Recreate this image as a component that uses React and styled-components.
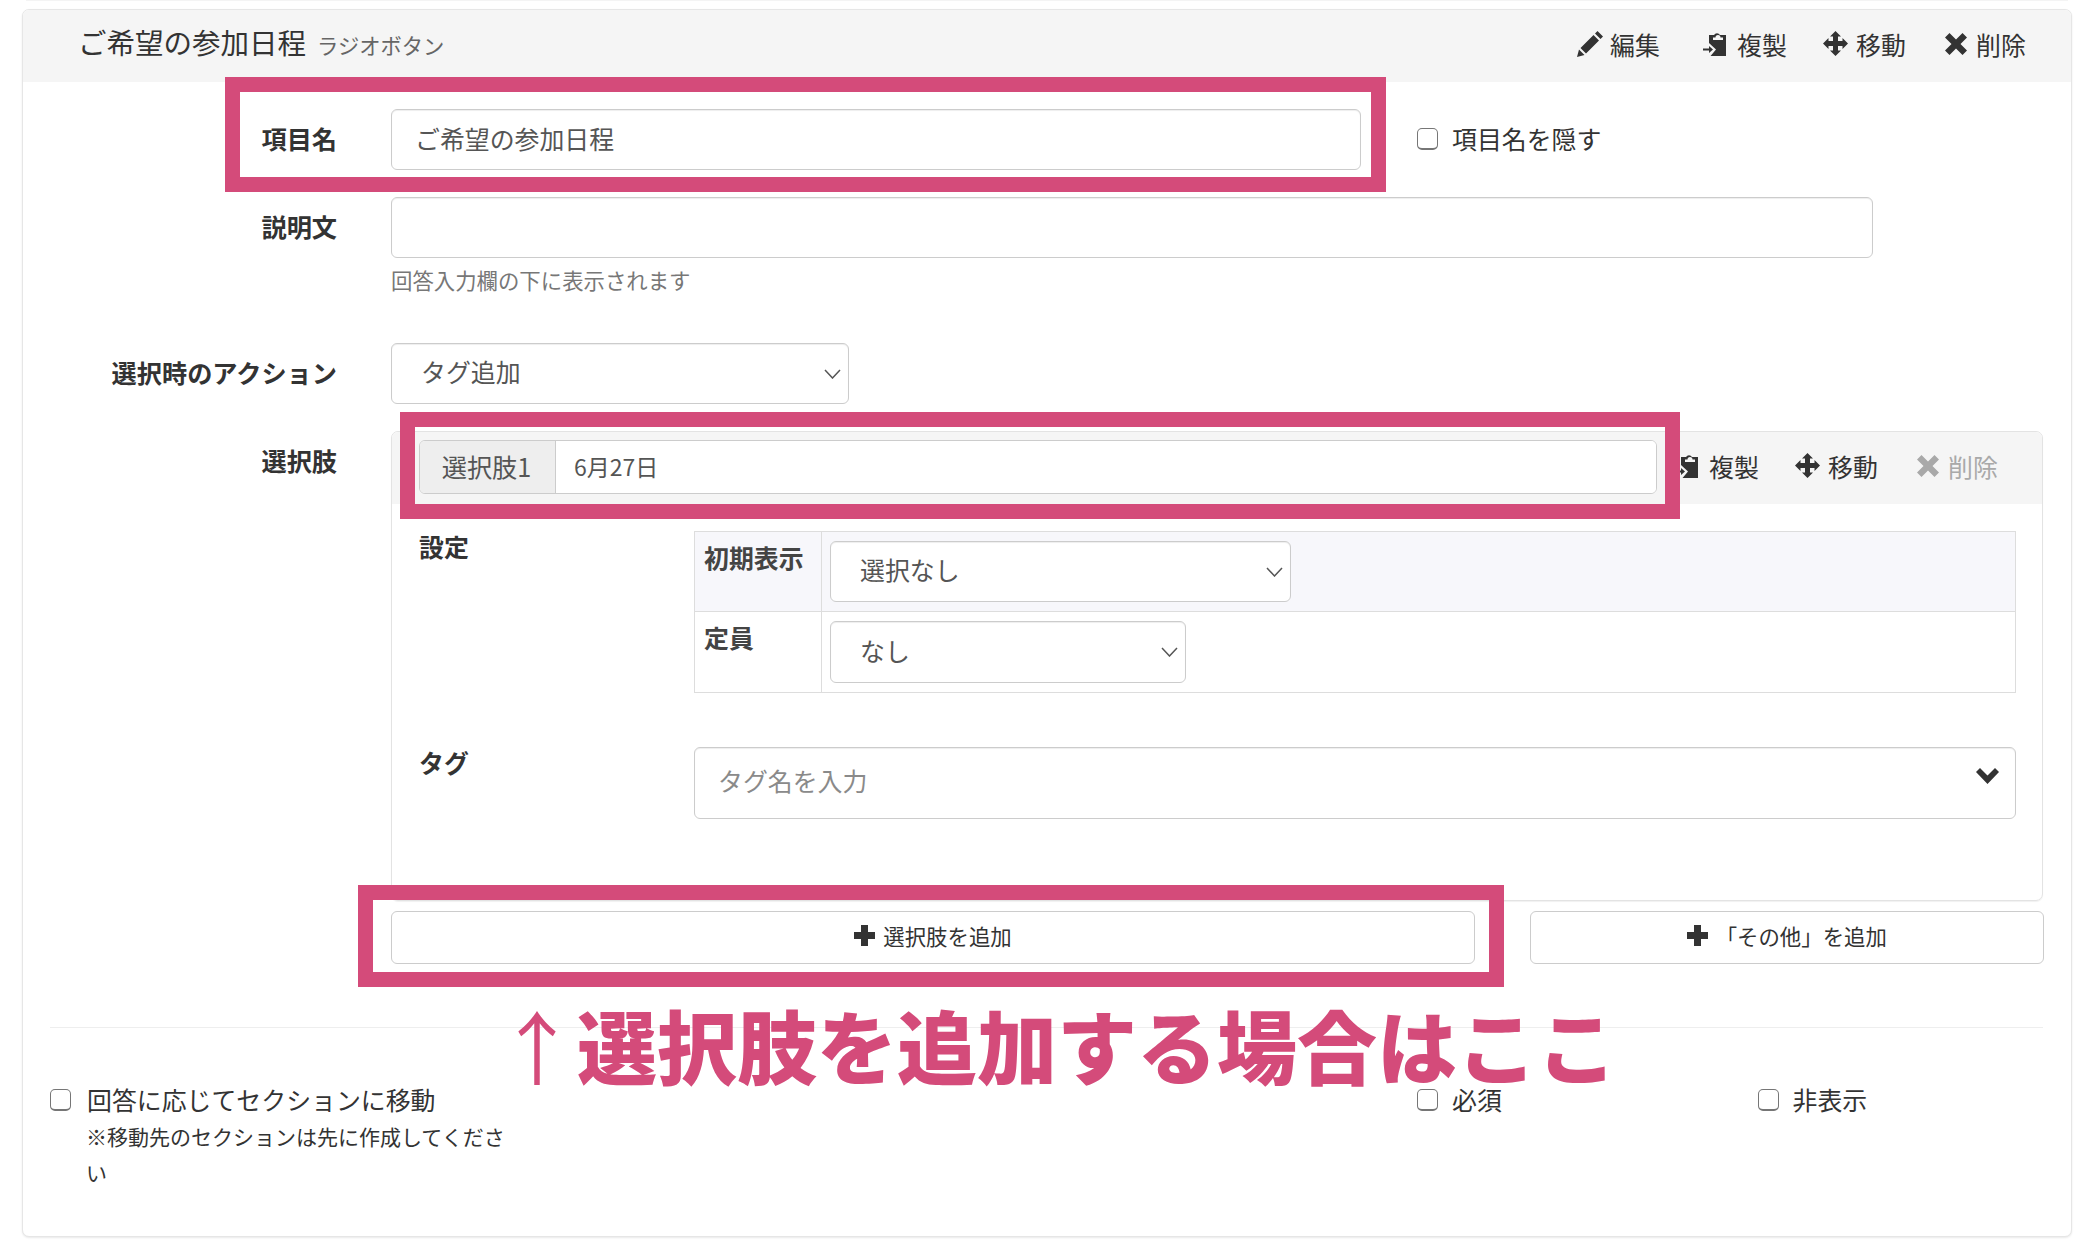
import React from 'react';
import styled, { createGlobalStyle } from 'styled-components';

const PINK = '#d44b7a';
const FONT = '"Noto Sans CJK JP", "Noto Sans", sans-serif';

const Global = createGlobalStyle`
  html, body { margin: 0; padding: 0; background: #fff; }
  body { font-family: ${FONT}; color: #333; font-size: 24.9px; line-height: 34px; }
  * { box-sizing: border-box; }
`;

const Page = styled.div`
  position: relative;
  width: 2086px;
  height: 1254px;
  overflow: hidden;
  padding: 0 14px 0 22px;
`;

const PrevEdge = styled.div`
  height: 1px;
  margin: 0 4px 8px;
  background: #f4f4f4;
`;

const Card = styled.section`
  width: 2050px;
  border: 1px solid #e6e6e6;
  border-radius: 7px;
  box-shadow: 0 1px 2px rgba(0, 0, 0, 0.09);
  background: #fff;
  overflow: hidden;
`;

const CardHeader = styled.header`
  height: 72px;
  background: #f5f5f5;
  display: flex;
  align-items: center;
  justify-content: space-between;
  padding: 0 45px 5px 55px;
`;

const TitleGroup = styled.div`
  display: flex;
  align-items: baseline;
  gap: 11px;
`;

const Title = styled.h2`
  margin: 0;
  font-size: 28.5px;
  font-weight: 400;
  color: #333;
`;

const TypeName = styled.small`
  font-size: 21.3px;
  color: #666;
`;

const Actions = styled.div`
  display: flex;
  align-items: center;
`;

const Action = styled.span`
  display: flex;
  align-items: center;
  width: ${(p) => p.$w}px;
  color: ${(p) => (p.$disabled ? '#a9a9a9' : '#333')};
  font-size: 24.9px;
  white-space: nowrap;
`;

const ActionIcon = styled.span`
  width: ${(p) => p.$w}px;
  display: flex;
  flex: none;
  align-items: center;
`;

const CardBody = styled.div`
  padding: 27px 28px 0 0;
`;

const Row = styled.div`
  display: grid;
  grid-template-columns: 368px 1fr;
  margin-bottom: ${(p) => p.$mb ?? 27}px;
`;

const RowLabel = styled.label`
  font-weight: 700;
  font-size: 25.2px;
  text-align: right;
  padding: 12px 54px 0 0;
  color: #333;
`;

const Line = styled.div`
  display: flex;
  align-items: center;
`;

const TextInput = styled.input`
  display: block;
  width: ${(p) => p.$w}px;
  height: 61px;
  padding: 0 23px 4px;
  border: 1px solid #ccc;
  border-radius: 6px;
  box-shadow: inset 0 1px 1px rgba(0, 0, 0, 0.07);
  background: #fff;
  font: 400 24.9px ${FONT};
  color: #555;
  outline: none;
  &::placeholder { color: #8a8a8a; opacity: 1; }
`;

const HelpText = styled.p`
  margin: 7px 0 3px;
  font-size: 21.4px;
  line-height: 30px;
  color: #777;
`;

const SelectWrap = styled.div`
  position: relative;
  width: ${(p) => p.$w}px;
  height: ${(p) => p.$h ?? 61}px;
`;

const Select = styled.select`
  appearance: none;
  width: 100%;
  height: 100%;
  padding: 0 29px 5px;
  border: 1px solid #ccc;
  border-radius: 6px;
  box-shadow: inset 0 1px 1px rgba(0, 0, 0, 0.07);
  background: #fff;
  font: 400 24.9px ${FONT};
  color: #555;
  outline: none;
`;

const SelectArrow = styled.svg`
  position: absolute;
  right: 8px;
  top: 50%;
  margin-top: -5px;
  width: 17px;
  height: 10px;
  fill: none;
  stroke: #555;
  stroke-width: 1.5;
`;

const CheckLabel = styled.label`
  display: flex;
  align-items: flex-start;
  gap: ${(p) => p.$gap ?? 14}px;
  font-size: 24.9px;
  line-height: 30px;
  padding-bottom: 4px;
  color: #333;
`;

const Check = styled.input.attrs({ type: 'checkbox' })`
  appearance: none;
  flex: none;
  margin: 5px 0 0;
  width: 21px;
  height: 22px;
  border: 1.5px solid #767676;
  border-bottom-width: 2px;
  border-radius: 5px;
  background: #fff;
`;

const HideCheck = styled.div`
  margin-left: 56px;
`;

const Panel = styled.div`
  width: 1652px;
  border: 1px solid #e3e3e3;
  border-radius: 7px;
  box-shadow: 0 1px 1px rgba(0, 0, 0, 0.06);
  overflow: hidden;
`;

const PanelHeader = styled.div`
  height: 72px;
  background: #f5f5f5;
  display: flex;
  align-items: center;
  justify-content: space-between;
  padding: 0 44px 2px 27px;
`;

const PanelActions = styled(Actions)`
  padding-bottom: 3px;
`;

const InputGroup = styled.div`
  display: flex;
  width: 1238px;
  height: 54px;
  border: 1px solid #ccc;
  border-radius: 6px;
  overflow: hidden;
  background: #fff;
`;

const Addon = styled.span`
  width: 136px;
  flex: none;
  display: flex;
  align-items: center;
  justify-content: center;
  padding: 0 2px 2px 0;
  background: #eee;
  border-right: 1px solid #ccc;
  color: #555;
  font-size: 25.2px;
`;

const GroupInput = styled.input`
  flex: 1;
  border: 0;
  padding: 0 18px 2px;
  font: 400 23px ${FONT};
  color: #555;
  outline: none;
`;

const PanelBody = styled.div`
  padding: 27px 26px 81px 27px;
`;

const SettingRow = styled.div`
  display: grid;
  grid-template-columns: 275px 1fr;
  margin-bottom: ${(p) => p.$mb ?? 0}px;
`;

const SettingLabel = styled.div`
  font-weight: 700;
  font-size: 24.9px;
  line-height: 30px;
`;

const SettingTable = styled.table`
  width: 1322px;
  border-collapse: collapse;
  table-layout: fixed;
`;

const TableRow = styled.tr`
  height: ${(p) => p.$h}px;
  background: ${(p) => (p.$shade ? '#f7f7fb' : '#fff')};
`;

const TableHead = styled.th`
  width: 127px;
  padding: 8px 0 0 9px;
  vertical-align: top;
  text-align: left;
  font-size: 24.9px;
  font-weight: 700;
  border: 1px solid #ddd;
  color: #444;
`;

const TableCell = styled.td`
  padding: 9px 8px;
  vertical-align: top;
  border: 1px solid #ddd;
`;

const TagBox = styled.div`
  position: relative;
`;

const TagArrow = styled.svg`
  position: absolute;
  right: 17px;
  top: 21px;
  width: 23px;
  height: 16px;
  fill: #333;
`;

const TagInput = styled(TextInput)`
  width: 100%;
  height: 72px;
  padding-bottom: 7px;
`;

const AddRow = styled.div`
  display: grid;
  grid-template-columns: 1084px 513.5px;
  gap: 55px;
  margin: 10px 0 0 368px;
`;

const AddButton = styled.button`
  height: 53px;
  display: flex;
  align-items: center;
  justify-content: center;
  gap: 8px;
  padding-bottom: 5px;
  border: 1px solid #ccc;
  border-radius: 6px;
  background: #fff;
  color: #333;
  font: 400 21.4px ${FONT};
`;

const Footer = styled.div`
  margin: 63px 0 0 27px;
  border-top: 1px solid #eee;
  padding: 56px 0 46px;
  display: grid;
  grid-template-columns: 1367px 340.5px 1fr;
`;

const Note = styled.p`
  margin: 0 0 0 36px;
  width: 422px;
  font-size: 21px;
  line-height: 36px;
  color: #333;
`;

const Frame = styled.div`
  position: absolute;
  left: ${(p) => p.$x}px;
  top: ${(p) => p.$y}px;
  width: ${(p) => p.$w}px;
  height: ${(p) => p.$h}px;
  border: 15px solid ${PINK};
  pointer-events: none;
`;

const Annotation = styled.div`
  position: absolute;
  left: 497px;
  top: 1008px;
  font-size: 80px;
  line-height: 70px;
  font-weight: 900;
  white-space: nowrap;
  color: ${PINK};
`;

const Arrow = styled.span`
  font-weight: 400;
`;

const PencilIcon = () => (
  <svg width="26" height="26" viewBox="0 0 26 26" fill="currentColor">
    <path d="M0 26l2-7.500 5.500 5.500zM3.500 17L16.500 4l5.500 5.500-13 13zM18 2.500L20.500 0 26 5.500l-2.500 2.500z" />
  </svg>
);

const PasteIcon = () => (
  <svg width="24" height="25" viewBox="0 0 24 25" fill="currentColor">
    <path fillRule="evenodd" d="M6 4h5a3.500 3.500 0 0 1 6 0h6v21H7.500L13 18.500 6 12zM10 6.500v2.500h10V6.500h-2.500a2.500 2.500 0 0 0-5 0z" />
    <path d="M0 17.500h6V15l4 3.500-4 3.500v-2.500H0z" />
  </svg>
);

const MoveIcon = () => (
  <svg width="25" height="25" viewBox="0 0 25 25" fill="currentColor">
    <path d="M12.500 0L18 5.500h-3V10h4.500V7l5.500 5.500-5.500 5.500v-3H15v4.500h3L12.500 25 7 19.500h3V15H5.500v3L0 12.500 5.500 7v3H10V5.500H7z" />
  </svg>
);

const CloseIcon = () => (
  <svg width="22" height="22" viewBox="0 0 22 22" fill="currentColor">
    <path d="M4.500 0L11 6.500 17.500 0 22 4.500 15.500 11 22 17.500 17.500 22 11 15.500 4.500 22 0 17.500 6.500 11 0 4.500z" />
  </svg>
);

const PlusIcon = () => (
  <svg width="21" height="21" viewBox="0 0 21 21" fill="currentColor">
    <path d="M7 0h7v7h7v7h-7v7H7v-7H0V7h7z" />
  </svg>
);

const ThinChevron = () => (
  <SelectArrow viewBox="0 0 17 10">
    <path d="M1 1l7.500 8L16 1" />
  </SelectArrow>
);

const Dropdown = ({ w, h, children }) => (
  <SelectWrap $w={w} $h={h}>
    <Select defaultValue={children}>
      <option>{children}</option>
    </Select>
    <ThinChevron />
  </SelectWrap>
);

export default function App() {
  return (
    <Page>
      <Global />
      <PrevEdge />
      <Card>
        <CardHeader>
          <TitleGroup>
            <Title>ご希望の参加日程</Title>
            <TypeName>ラジオボタン</TypeName>
          </TitleGroup>
          <Actions>
            <Action $w={126}><ActionIcon $w={33}><PencilIcon /></ActionIcon>編集</Action>
            <Action $w={120}><ActionIcon $w={34}><PasteIcon /></ActionIcon>複製</Action>
            <Action $w={122}><ActionIcon $w={33}><MoveIcon /></ActionIcon>移動</Action>
            <Action $w={81}><ActionIcon $w={31}><CloseIcon /></ActionIcon>削除</Action>
          </Actions>
        </CardHeader>
        <CardBody>
          <Row>
            <RowLabel>項目名</RowLabel>
            <Line>
              <TextInput $w={970} defaultValue="ご希望の参加日程" />
              <HideCheck>
                <CheckLabel><Check />項目名を隠す</CheckLabel>
              </HideCheck>
            </Line>
          </Row>
          <Row $mb={45}>
            <RowLabel>説明文</RowLabel>
            <div>
              <TextInput $w={1482} />
              <HelpText>回答入力欄の下に表示されます</HelpText>
            </div>
          </Row>
          <Row>
            <RowLabel>選択時のアクション</RowLabel>
            <Dropdown w={458}>タグ追加</Dropdown>
          </Row>
          <Row $mb={0}>
            <RowLabel>選択肢</RowLabel>
            <Panel>
              <PanelHeader>
                <InputGroup>
                  <Addon>選択肢1</Addon>
                  <GroupInput defaultValue="6月27日" />
                </InputGroup>
                <PanelActions>
                  <Action $w={120}><ActionIcon $w={34}><PasteIcon /></ActionIcon>複製</Action>
                  <Action $w={122}><ActionIcon $w={33}><MoveIcon /></ActionIcon>移動</Action>
                  <Action $w={81} $disabled><ActionIcon $w={31}><CloseIcon /></ActionIcon>削除</Action>
                </PanelActions>
              </PanelHeader>
              <PanelBody>
                <SettingRow $mb={54}>
                  <SettingLabel>設定</SettingLabel>
                  <SettingTable>
                    <tbody>
                      <TableRow $h={80} $shade>
                        <TableHead>初期表示</TableHead>
                        <TableCell><Dropdown w={461}>選択なし</Dropdown></TableCell>
                      </TableRow>
                      <TableRow $h={81}>
                        <TableHead>定員</TableHead>
                        <TableCell><Dropdown w={356} h={62}>なし</Dropdown></TableCell>
                      </TableRow>
                    </tbody>
                  </SettingTable>
                </SettingRow>
                <SettingRow>
                  <SettingLabel>タグ</SettingLabel>
                  <TagBox>
                    <TagInput placeholder="タグ名を入力" />
                    <TagArrow viewBox="0 0 23 16">
                      <path d="M0 4l4-4 7.500 7.500L19 0l4 4-11.500 12z" />
                    </TagArrow>
                  </TagBox>
                </SettingRow>
              </PanelBody>
            </Panel>
          </Row>
          <AddRow>
            <AddButton><PlusIcon />選択肢を追加</AddButton>
            <AddButton><PlusIcon />「その他」を追加</AddButton>
          </AddRow>
          <Footer>
            <div>
              <CheckLabel $gap={16}><Check />回答に応じてセクションに移動</CheckLabel>
              <Note>※移動先のセクションは先に作成してください</Note>
            </div>
            <div><CheckLabel><Check />必須</CheckLabel></div>
            <div><CheckLabel><Check />非表示</CheckLabel></div>
          </Footer>
        </CardBody>
      </Card>
      <Frame $x={225} $y={77} $w={1161} $h={115} />
      <Frame $x={400} $y={412} $w={1280} $h={107} />
      <Frame $x={358} $y={885} $w={1146} $h={102} />
      <Annotation><Arrow>↑</Arrow>選択肢を追加する場合はここ</Annotation>
    </Page>
  );
}
